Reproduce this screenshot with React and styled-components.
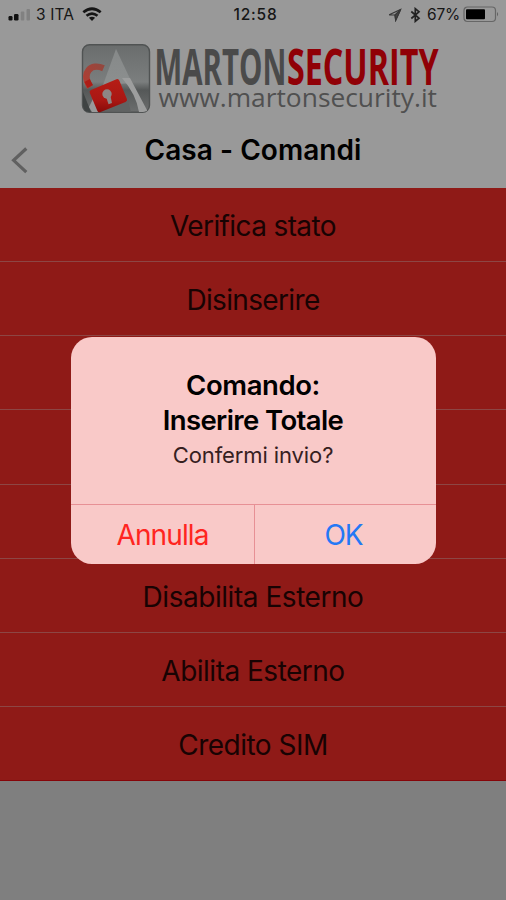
import React from "react";
import styled, { createGlobalStyle } from "styled-components";

const GlobalStyle = createGlobalStyle`
  body { margin: 0; background: #7f7f7f; }
  * { box-sizing: border-box; }
`;

const Screen = styled.div`
  width: 506px;
  height: 900px;
  overflow: hidden;
  position: relative;
  background: #7f7f7f;
  color: #000;
  font-family: Inter, "Liberation Sans", sans-serif;
`;

const Header = styled.header`
  height: 188px;
  background: #999;
`;

const StatusBar = styled.div`
  display: grid;
  grid-template-columns: 1fr auto 1fr;
  align-items: center;
  height: 29px;
  padding: 0 6px 0 8px;
`;

const StatusGroup = styled.div`
  display: flex;
  align-items: center;
  justify-content: ${(p) => (p.$end ? "flex-end" : "flex-start")};
`;

const StatusText = styled.span`
  font-size: 15.5px;
  line-height: 20px;
  white-space: nowrap;
  color: #161616;
  font-weight: ${(p) => p.$weight || 400};
  letter-spacing: ${(p) => p.$spacing || 0}px;
  margin: ${(p) => p.$margin || 0};
`;

const Brand = styled.div`
  height: 91px;
  display: flex;
  padding-left: 80px;
`;

const NavBar = styled.div`
  display: grid;
  grid-template-columns: 40px 1fr 40px;
  height: 68px;
`;

const BackButton = styled.button`
  border: 0;
  padding: 26px 0 0 9px;
  background: none;
  display: flex;
`;

const Title = styled.h1`
  margin: 12px 0 0;
  text-align: center;
  font-size: 28px;
  line-height: 36px;
  font-weight: 600;
  letter-spacing: ${(p) => p.$spacing}px;
`;

const CommandList = styled.ul`
  list-style: none;
  margin: 0;
  padding: 0;
  height: 593px;
  display: grid;
  grid-template-rows: repeat(8, 1fr);
  background: #8f1a17;
`;

const Command = styled.li`
  display: flex;
  align-items: center;
  justify-content: center;
  padding-top: 3px;
  border-bottom: 1.5px solid ${(p) => (p.$last ? "#850509" : "#8d4644")};
  font-size: 28px;
  line-height: 36px;
  color: #180303;
  letter-spacing: ${(p) => p.$spacing || 0}px;
`;

const Overlay = styled.div`
  position: absolute;
  inset: 0;
  padding: 337px 70px 0 71px;
`;

const Dialog = styled.section`
  height: 227px;
  display: flex;
  flex-direction: column;
  overflow: hidden;
  border-radius: 21px;
  background: #f9c9c8;
`;

const Message = styled.div`
  height: 167px;
  padding: 31px 1px 0 0;
  text-align: center;
`;

const DialogTitle = styled.h2`
  margin: 0;
  font-size: 27.5px;
  line-height: 35px;
  font-weight: 600;
  letter-spacing: ${(p) => p.$spacing}px;
`;

const DialogText = styled.p`
  margin: 0;
  font-size: 22px;
  line-height: 34px;
  color: #36201f;
  letter-spacing: ${(p) => p.$spacing}px;
`;

const Actions = styled.div`
  height: 60px;
  display: grid;
  grid-template-columns: 183px 1fr;
  border-top: 1px solid #e79095;
`;

const Action = styled.button`
  border: 0;
  border-left: ${(p) => (p.$divided ? "1px solid #e79095" : "0")};
  padding: ${(p) => (p.$divided ? "1px 4px 0 0" : "1px 0 0")};
  background: none;
  font-family: inherit;
  font-size: 28px;
  letter-spacing: ${(p) => p.$spacing}px;
  color: ${(p) => p.$color};
`;

const commands = [
  ["Verifica stato", -0.62],
  ["Disinserire", -0.65],
  ["", 0],
  ["", 0],
  ["", 0],
  ["Disabilita Esterno", -0.45],
  ["Abilita Esterno", -0.5],
  ["Credito SIM", -0.5],
];

function Signal() {
  return (
    <svg width="23" height="14" viewBox="0 0 23 14">
      <rect x="0.5" y="8" width="4" height="4.5" rx="1.2" fill="#111" />
      <rect x="6" y="6" width="4.5" height="6.5" rx="1.2" fill="#111" />
      <rect x="12.8" y="3.5" width="3.5" height="9" rx="1" fill="#818181" />
      <rect x="18.5" y="1" width="3.5" height="11.5" rx="1" fill="#818181" />
    </svg>
  );
}

function Wifi() {
  return (
    <svg width="20" height="15" viewBox="0 0 20 15" fill="none" stroke="#151515" strokeWidth="2.7">
      <path d="M1.3 5.3Q10 -1.8 18.7 5.3M4.5 8.8Q10 4.3 15.5 8.8" />
      <path d="M10 14 6.9 10.8Q10 8.5 13.1 10.8Z" fill="#151515" stroke="none" />
    </svg>
  );
}

function Location() {
  return (
    <svg width="14" height="14" viewBox="0 0 14 14" fill="none" stroke="#383838" strokeWidth="1.2">
      <path d="M1.2 6.8 12.6 1.4 7.7 12.2 7 7Z" />
      <path d="M7 7 12.6 1.4 7.7 12.2Z" fill="#444" />
    </svg>
  );
}

function Bluetooth() {
  return (
    <svg width="11" height="16" viewBox="0 0 11 16" fill="none" stroke="#222" strokeWidth="1.7">
      <path d="M1.3 4.5 9 11.2 5.3 14.3V1.7L9 4.8 1.3 11.5" />
    </svg>
  );
}

function Battery() {
  return (
    <svg width="37" height="17" viewBox="0 0 37 17">
      <rect x="1" y="1" width="31.5" height="14.5" rx="3.5" fill="none" stroke="#666" strokeWidth="1.2" />
      <rect x="3" y="3.3" width="19" height="10" rx="1" fill="#000" />
      <path d="M34 6Q36.2 8.2 34 10.5Z" fill="#626262" />
    </svg>
  );
}

function Logo() {
  return (
    <svg width="364" height="91" viewBox="80 29 364 91">
      <defs>
        <linearGradient id="tile" x1="0" y1="0" x2="0" y2="1">
          <stop offset="0" stopColor="#6a6d6d" />
          <stop offset="0.55" stopColor="#7b7e7e" />
          <stop offset="0.67" stopColor="#555858" />
          <stop offset="1" stopColor="#6c6e6e" />
        </linearGradient>
        <linearGradient id="peak" x1="0" y1="0" x2="0" y2="1">
          <stop offset="0" stopColor="#868989" />
          <stop offset="1" stopColor="#8c8f8f" />
        </linearGradient>
        <linearGradient id="lock" x1="0" y1="0" x2="0" y2="1">
          <stop offset="0" stopColor="#b61d16" />
          <stop offset="0.65" stopColor="#a91713" />
          <stop offset="1" stopColor="#870b09" />
        </linearGradient>
        <linearGradient id="shackle" x1="1" y1="0" x2="0" y2="1">
          <stop offset="0" stopColor="#93483f" />
          <stop offset="1" stopColor="#b13d32" />
        </linearGradient>
        <clipPath id="tileClip"><rect x="83" y="45" width="66" height="67" rx="6" /></clipPath>
      </defs>
      <rect x="82.5" y="44.8" width="67" height="67.5" rx="7" fill="url(#tile)" stroke="#505353" strokeWidth="1.4" />
      <g clipPath="url(#tileClip)">
        <path d="M116 49 132 83 103 85Z" fill="url(#peak)" />
        <path d="M122 78H130L148 112H139Q136 94 122 78Z" fill="#9d9e9e" />
        <path d="M83 92 91 112H83Z" fill="#3f4343" />
        <path d="M93 99 89 107 92 112H101Z" fill="#999a9a" />
        <path d="M101 111 128 101 131 112Z" fill="#606363" />
      </g>
      <path d="M90 87C81 72 91 63 103.5 68.2" fill="none" stroke="url(#shackle)" strokeWidth="6.6" />
      <path d="M87.1 80.5 90.3 86.5" stroke="#ad1d17" strokeWidth="6" />
      <path d="M89.8 93Q88.9 90.8 91 90L116.5 79.2Q118.6 78.6 119.3 80.6L126.9 99Q127.7 101 125.5 102L100 112.2Q98.2 112.8 97.3 110.8Z" fill="url(#lock)" />
      <circle cx="107" cy="94" r="4.7" fill="#8e8585" />
      <path d="M105.5 95 110 94 112 103 108.5 104.2Z" fill="#8e8585" />
      <g fontFamily='"Open Sans", sans-serif'>
        <text x="154.5" y="84.8" fontSize="50.5" fontWeight="700" fill="#4a4a4a" textLength="132" lengthAdjust="spacingAndGlyphs">MARTON</text>
        <text x="287" y="84.8" fontSize="50.5" fontWeight="700" fill="#900006" textLength="151.5" lengthAdjust="spacingAndGlyphs">SECURITY</text>
        <text x="158.5" y="107" fontSize="25" fill="#505050" textLength="278.5" lengthAdjust="spacingAndGlyphs">www.martonsecurity.it</text>
      </g>
    </svg>
  );
}

export default function App() {
  return (
    <Screen>
      <GlobalStyle />
      <Header>
        <StatusBar>
          <StatusGroup>
            <Signal />
            <StatusText $margin="0 8px 0 5px" $spacing={0.1}>3 ITA</StatusText>
            <Wifi />
          </StatusGroup>
          <StatusText $weight={500} $spacing={0.75} $margin="0 0 0 3px">12:58</StatusText>
          <StatusGroup $end>
            <Location />
            <StatusText $margin="0 8px 0 0" />
            <Bluetooth />
            <StatusText $margin="0 3px 0 6px" $spacing={-0.2}>67%</StatusText>
            <Battery />
          </StatusGroup>
        </StatusBar>
        <Brand><Logo /></Brand>
        <NavBar>
          <BackButton aria-label="Indietro">
            <svg width="20" height="30" viewBox="0 0 20 30" fill="none" stroke="#606060" strokeWidth="3.2">
              <path d="M17.3 2.5 4.6 14.3 17.3 26.2" />
            </svg>
          </BackButton>
          <Title $spacing={0.05}>Casa - Comandi</Title>
        </NavBar>
      </Header>
      <CommandList>
        {commands.map(([label, spacing], i) => (
          <Command key={i} $spacing={spacing} $last={i === commands.length - 1}>{label}</Command>
        ))}
      </CommandList>
      <Overlay>
        <Dialog role="alertdialog">
          <Message>
            <DialogTitle $spacing={-0.4}>Comando:</DialogTitle>
            <DialogTitle $spacing={-0.6}>Inserire Totale</DialogTitle>
            <DialogText $spacing={-0.1}>Confermi invio?</DialogText>
          </Message>
          <Actions>
            <Action $color="#ff2520" $spacing={-0.9}>Annulla</Action>
            <Action $color="#2478f5" $spacing={-1} $divided>OK</Action>
          </Actions>
        </Dialog>
      </Overlay>
    </Screen>
  );
}
